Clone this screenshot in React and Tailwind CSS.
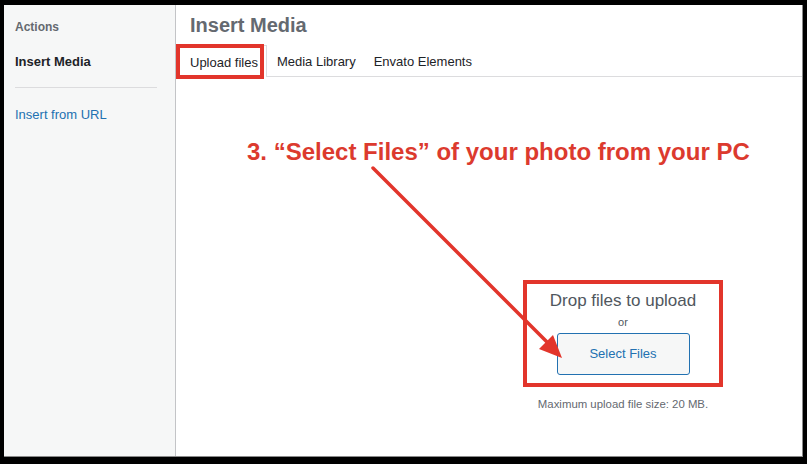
import React from "react";

export default function App() {
  const font = { fontFamily: '"Liberation Sans", Arial, sans-serif' };
  return (
    <div
      className="relative w-[807px] h-[464px] bg-black pt-[5px] pl-[4px] pr-[4px] pb-[7px] overflow-hidden"
      style={font}
    >
      <div className="flex h-full w-full bg-white border-b border-r border-[#8a8a8a]">
        {/* Sidebar */}
        <div className="w-[172px] shrink-0 bg-[#f6f7f7] border-r border-[#c3c4c7] pl-[11px] pt-[15px]">
          <div className="text-[12px] font-bold text-[#646970] leading-[14px]">Actions</div>
          <div className="mt-[20px] text-[13px] font-bold text-[#1d2327] leading-[16px]">Insert Media</div>
          <div className="mt-[17px] w-[142px] h-px bg-[#dcdcde]" />
          <div className="mt-[19px] text-[13px] text-[#2271b1] leading-[16px]">Insert from URL</div>
        </div>
        {/* Main */}
        <div className="flex-1 flex flex-col">
          <div className="pl-[14px] pt-[8px] h-[40px]">
            <h1 className="text-[20px] font-bold text-[#646970] leading-[24px]">Insert Media</h1>
          </div>
          <div className="flex h-[32px] border-b border-[#dcdcde] pl-[2px] text-[13px] text-[#1d2327]">
            <div className="flex items-center pl-[11px] pr-[8px] pt-[2px] bg-white border-l border-r border-t border-[#dcdcde] -mb-px h-[32px]">
              Upload files
            </div>
            <div className="flex items-center pt-[2px] px-[10px]">Media Library</div>
            <div className="flex items-center pt-[2px] px-[8px]">Envato Elements</div>
          </div>
          <div className="flex-1 pl-[347px] pt-[203px]">
            <div className="w-[200px] flex flex-col items-center">
              <div className="w-[200px] h-[107px] border-[4px] border-[#e2352b] flex flex-col items-center pt-[7px]">
                <div className="text-[17px] text-[#50575e] leading-[20px]">Drop files to upload</div>
                <div className="mt-[5px] text-[11px] text-[#50575e] leading-[13px]">or</div>
                <button className="mt-[4px] w-[133px] h-[42px] rounded-[3px] border border-[#2271b1] bg-[#f6f7f7] text-[13px] text-[#2271b1]">
                  Select Files
                </button>
              </div>
              <div className="mt-[10px] text-[11.4px] text-[#646970] leading-[14px]">
                Maximum upload file size: 20 MB.
              </div>
            </div>
          </div>
        </div>
      </div>

      {/* Annotation overlays */}
      <div className="absolute left-[176px] top-[44px] w-[88px] h-[35px] border-[4px] border-[#e2352b]" />
      <div className="absolute left-[247px] top-[138px] text-[24px] font-bold text-[#dc3a2e] leading-[28px] whitespace-nowrap">
        3. “Select Files” of your photo from your PC
      </div>
      <svg className="absolute left-0 top-0" width="807" height="464" viewBox="0 0 807 464">
        <line x1="373" y1="168" x2="550" y2="345" stroke="#e2352b" strokeWidth="3.5" strokeLinecap="round" />
        <polygon points="562,358 539,349 553,335" fill="#e2352b" />
      </svg>
    </div>
  );
}
